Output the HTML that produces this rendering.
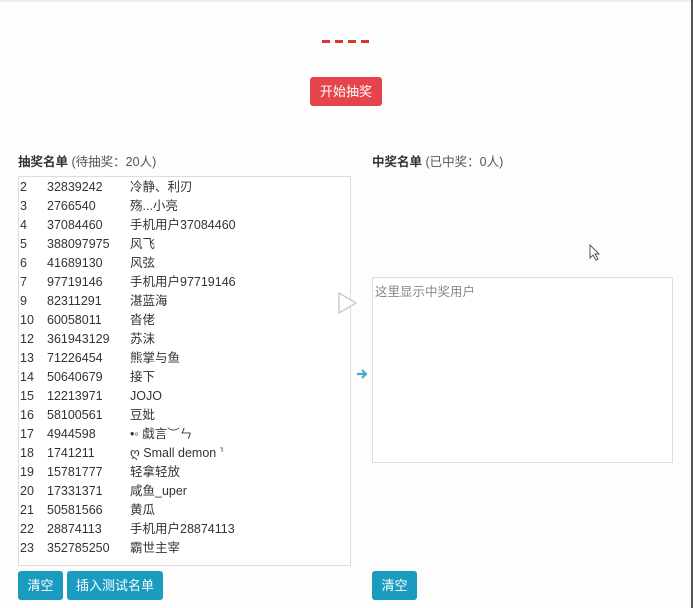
<!DOCTYPE html>
<html><head><meta charset="utf-8"><style>
body{margin:0;width:693px;height:608px;background:#fefdfe;position:relative;overflow:hidden;font-family:"Liberation Sans","Noto Sans CJK SC",sans-serif;color:#333}
.a{position:absolute}
.row{position:absolute;left:20px;height:19px;line-height:19px;font-size:12.5px;color:#333;white-space:nowrap}
.row span{position:absolute}
.btn{position:absolute;color:#fff;font-size:13px;text-align:center;border-radius:3px}
.d{position:absolute;top:40px;width:8px;height:3px;background:#d8362e}
</style></head><body>
<div class="a" style="left:0;top:0;width:693px;height:2px;background:#eee"></div>
<div class="a" style="left:691px;top:0;width:2px;height:608px;background:#555"></div>
<div class="d" style="left:322px"></div><div class="d" style="left:335px"></div><div class="d" style="left:348px"></div><div class="d" style="left:361px"></div>
<div class="btn" style="left:310px;top:77px;width:72px;height:29px;line-height:29px;background:#e5444a">开始抽奖</div>
<div class="a" style="left:18px;top:151px;font-size:12.5px"><b>抽奖名单</b> <span style="color:#555">(待抽奖：20人)</span></div>
<div class="a" style="left:372px;top:151px;font-size:12.5px"><b>中奖名单</b> <span style="color:#555">(已中奖：0人)</span></div>
<div class="a" style="left:18px;top:176px;width:331px;height:388px;border:1px solid #ddd;background:#fff"></div>
<div class="a" style="left:372px;top:277px;width:299px;height:184px;border:1px solid #ddd;background:#fff"></div>
<div class="a" style="left:375px;top:281px;font-size:12.5px;color:#888">这里显示中奖用户</div>
<svg class="a" style="left:356px;top:368px" width="12" height="12"><path d="M1 6 H10 M6 2 L10 6 L6 10" fill="none" stroke="#4aa8d0" stroke-width="2.2"/></svg>
<svg class="a" style="left:334px;top:290px" width="26" height="26"><path d="M5 3 L22 13 L5 23 Z" fill="#fff" stroke="#ccc" stroke-width="1.5" stroke-linejoin="round"/></svg>
<div class="row" style="top:178px"><span>2</span><span style="left:27px">32839242</span><span style="left:110px">冷静、利刃</span></div>
<div class="row" style="top:197px"><span>3</span><span style="left:27px">2766540</span><span style="left:110px">殇...小亮</span></div>
<div class="row" style="top:216px"><span>4</span><span style="left:27px">37084460</span><span style="left:110px">手机用户37084460</span></div>
<div class="row" style="top:235px"><span>5</span><span style="left:27px">388097975</span><span style="left:110px">风飞</span></div>
<div class="row" style="top:254px"><span>6</span><span style="left:27px">41689130</span><span style="left:110px">风弦</span></div>
<div class="row" style="top:273px"><span>7</span><span style="left:27px">97719146</span><span style="left:110px">手机用户97719146</span></div>
<div class="row" style="top:292px"><span>9</span><span style="left:27px">82311291</span><span style="left:110px">湛蓝海</span></div>
<div class="row" style="top:311px"><span>10</span><span style="left:27px">60058011</span><span style="left:110px">沓佬</span></div>
<div class="row" style="top:330px"><span>12</span><span style="left:27px">361943129</span><span style="left:110px">苏沫</span></div>
<div class="row" style="top:349px"><span>13</span><span style="left:27px">71226454</span><span style="left:110px">熊掌与鱼</span></div>
<div class="row" style="top:368px"><span>14</span><span style="left:27px">50640679</span><span style="left:110px">接下</span></div>
<div class="row" style="top:387px"><span>15</span><span style="left:27px">12213971</span><span style="left:110px">JOJO</span></div>
<div class="row" style="top:406px"><span>16</span><span style="left:27px">58100561</span><span style="left:110px">豆妣</span></div>
<div class="row" style="top:425px"><span>17</span><span style="left:27px">4944598</span><span style="left:110px">•◦ 戱言︶ㄣ</span></div>
<div class="row" style="top:444px"><span>18</span><span style="left:27px">1741211</span><span style="left:110px">ღ Small demon ﱞ</span></div>
<div class="row" style="top:463px"><span>19</span><span style="left:27px">15781777</span><span style="left:110px">轻拿轻放</span></div>
<div class="row" style="top:482px"><span>20</span><span style="left:27px">17331371</span><span style="left:110px">咸鱼_uper</span></div>
<div class="row" style="top:501px"><span>21</span><span style="left:27px">50581566</span><span style="left:110px">黄瓜</span></div>
<div class="row" style="top:520px"><span>22</span><span style="left:27px">28874113</span><span style="left:110px">手机用户28874113</span></div>
<div class="row" style="top:539px"><span>23</span><span style="left:27px">352785250</span><span style="left:110px">霸世主宰</span></div>
<div class="btn" style="left:18px;top:571px;width:45px;height:29px;line-height:29px;background:#1a9bc0">清空</div>
<div class="btn" style="left:67px;top:571px;width:96px;height:29px;line-height:29px;background:#1a9bc0">插入测试名单</div>
<div class="btn" style="left:372px;top:571px;width:45px;height:29px;line-height:29px;background:#1a9bc0">清空</div>
<svg class="a" style="left:588px;top:244px" width="14" height="18"><path d="M2 1 L2 14 L5 11 L8 16 L10 15 L7 10 L11 10 Z" fill="#fff" stroke="#555"/></svg>
</body></html>
